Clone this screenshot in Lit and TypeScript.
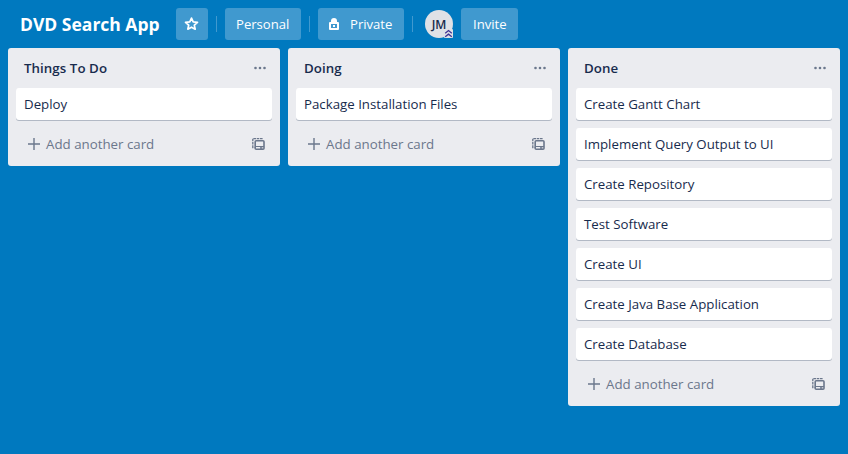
import { LitElement, html, css, svg } from "lit";
import { customElement, property } from "lit/decorators.js";

const starIcon = html`<svg width="16" height="16" viewBox="0 0 16 16" fill="none" stroke="#fff" stroke-width="1.7" stroke-linejoin="round">
  <path d="M7.5 2.1 L9.2 5.9 L13.5 6.4 L10.3 9.2 L11.2 13.2 L7.5 11.2 L3.8 13.2 L4.7 9.2 L1.5 6.4 L5.8 5.9 Z" />
</svg>`;

const lockIcon = html`<svg width="16" height="16" viewBox="0 0 16 16" fill="#fff">
  <path fill-rule="evenodd" d="M5 6 V5 A3 3 0 0 1 11 5 V6 H12 A1 1 0 0 1 13 7 V13 A1 1 0 0 1 12 14 H4 A1 1 0 0 1 3 13 V7 A1 1 0 0 1 4 6 Z M5 8 V12 H11 V8 Z" />
  <rect x="7" y="9" width="2" height="2" />
</svg>`;

const chevronsIcon = html`<svg width="9" height="9" viewBox="0 0 9 9">
  <rect width="9" height="9" rx="1" fill="#dfe1e6" />
  <path d="M1.2 4.2 L4.5 1.6 L7.8 4.2 M1.2 7.8 L4.5 5.2 L7.8 7.8" fill="none" stroke="#403294" stroke-width="1.3" />
</svg>`;

const dots = [1.5, 6, 10.5];
const dotsIcon = html`<svg width="14" height="4" viewBox="0 0 14 4" fill="#6b778c">
  ${dots.map((x) => svg`<circle cx=${x + 1} cy="2" r="1.3" />`)}
</svg>`;

const plusIcon = html`<svg width="12" height="12" viewBox="0 0 12 12" fill="none" stroke="#6b778c" stroke-width="1.4">
  <path d="M6 0 V12 M0 6 H12" />
</svg>`;

const templateIcon = html`<svg width="13" height="14" viewBox="0 0 13 14" fill="none" stroke="#6b778c">
  <path d="M10.6 1.6 H.8 V10.6 H2.4" stroke-width="1.3" stroke-dasharray="2.6 .7" />
  <rect x="3.2" y="3.7" width="8.8" height="8.6" rx="1" stroke-width="1.6" />
  <path d="M3 9.5 H12" stroke-width="1" />
  <path d="M8 11 H10.4" stroke-width="1.6" />
</svg>`;

@customElement("board-list")
class BoardList extends LitElement {
  @property() name = "";
  @property({ attribute: false }) cards: string[] = [];

  static styles = css`
    :host {
      display: flex;
      flex-direction: column;
      box-sizing: border-box;
      width: 272px;
      flex: none;
      padding: 0 8px 8px;
      border-radius: 3px;
      background: #ebecf0;
      color: #172b4d;
      font-size: 13.27px;
    }
    svg { display: block; flex: none; }
    .head {
      display: flex;
      align-items: center;
      justify-content: space-between;
      height: 40px;
      padding: 0 5px 0 8px;
    }
    .name { font-weight: 600; font-size: 13.3px; letter-spacing: 0.06px; }
    .cards { display: flex; flex-direction: column; gap: 8px; }
    .card {
      height: 32px;
      line-height: 32px;
      padding-left: 8px;
      border-radius: 3px;
      background: #fff;
      box-shadow: 0 1px 0 rgba(9, 30, 66, 0.25);
      white-space: nowrap;
    }
    .add {
      display: flex;
      align-items: center;
      height: 30px;
      margin-top: 8px;
      padding: 2px 7px 0 12px;
      box-sizing: border-box;
      color: #6b778c;
      font-size: 13.3px;
    }
    .label { flex: 1; padding-left: 6px; }
  `;

  render() {
    return html`
      <div class="head"><span class="name">${this.name}</span>${dotsIcon}</div>
      <div class="cards">${this.cards.map((c) => html`<div class="card">${c}</div>`)}</div>
      <div class="add">${plusIcon}<span class="label">Add another card</span>${templateIcon}</div>
    `;
  }
}

const lists = [
  { name: "Things To Do", cards: ["Deploy"] },
  { name: "Doing", cards: ["Package Installation Files"] },
  {
    name: "Done",
    cards: [
      "Create Gantt Chart",
      "Implement Query Output to UI",
      "Create Repository",
      "Test Software",
      "Create UI",
      "Create Java Base Application",
      "Create Database",
    ],
  },
];

@customElement("app-root")
class AppRoot extends LitElement {
  static styles = css`
    :host {
      display: block;
      height: 100vh;
      overflow: hidden;
      background: #0079bf;
      font-family: "Open Sans", "Noto Sans", sans-serif;
      color: #fff;
    }
    svg { display: block; flex: none; }
    .bar { display: flex; align-items: center; height: 48px; }
    .title {
      box-sizing: border-box;
      width: 176px;
      padding-left: 20px;
      font-size: 17.5px;
      font-weight: 700;
      white-space: nowrap;
    }
    .btn {
      display: flex;
      align-items: center;
      box-sizing: border-box;
      height: 32px;
      border-radius: 3px;
      background: #4099cf;
      font-size: 13.1px;
      white-space: nowrap;
    }
    .star { width: 32px; padding-left: 8px; }
    .personal { width: 76px; padding-left: 11px; }
    .private { width: 86px; padding-left: 8px; gap: 8px; }
    .invite { width: 57px; padding-left: 12px; margin-left: 8px; }
    .rule { width: 1px; height: 16px; margin: 0 8px; background: #4099cf; }
    .last { margin-right: 12px; }
    .avatar {
      position: relative;
      width: 28px;
      height: 28px;
      border-radius: 50%;
      background: #dfe1e6;
      color: #172b4d;
      font-size: 12px;
      font-weight: 600;
      line-height: 29px;
      text-align: center;
    }
    .badge { position: absolute; right: 0; bottom: 0; }
    .lists { display: flex; align-items: flex-start; gap: 8px; padding-left: 8px; }
  `;

  render() {
    return html`
      <div class="bar">
        <div class="title">DVD Search App</div>
        <div class="btn star">${starIcon}</div>
        <div class="rule"></div>
        <div class="btn personal">Personal</div>
        <div class="rule"></div>
        <div class="btn private">${lockIcon}<span>Private</span></div>
        <div class="rule last"></div>
        <div class="avatar">JM<span class="badge">${chevronsIcon}</span></div>
        <div class="btn invite">Invite</div>
      </div>
      <div class="lists">
        ${lists.map((l) => html`<board-list .name=${l.name} .cards=${l.cards}></board-list>`)}
      </div>
    `;
  }
}
